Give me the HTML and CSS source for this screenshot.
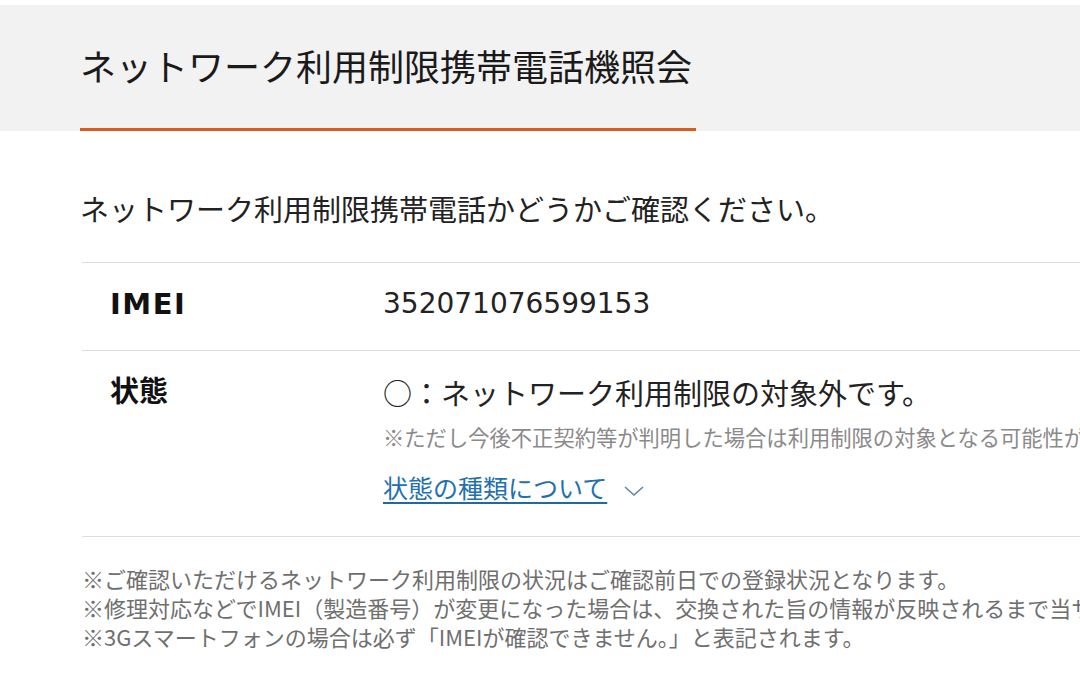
FILE: index.html
```html
<!DOCTYPE html>
<html lang="ja">
<head>
<meta charset="utf-8">
<title>ネットワーク利用制限携帯電話機照会</title>
<link rel="stylesheet" href="styles.css">
</head>
<body>
<div class="page">
  <header class="head">
    <h1 class="title">ネットワーク利用制限携帯電話機照会</h1>
  </header>
  <p class="intro">ネットワーク利用制限携帯電話かどうかご確認ください。</p>
  <div class="table">
    <div class="row row-imei">
      <div class="label label-latin">IMEI</div>
      <div class="value num">352071076599153</div>
    </div>
    <div class="row row-state">
      <div class="label">状態</div>
      <div class="value">
        <div class="status">○：ネットワーク利用制限の対象外です。</div>
        <div class="note">※ただし今後不正契約等が判明した場合は利用制限の対象となる可能性があります。</div>
        <div class="more">
          <a class="link" href="#">状態の種類について</a>
          <svg class="chev" width="22" height="12" viewBox="0 0 22 12"><polyline points="2,2 11,10 20,2" fill="none" stroke="#5f86a6" stroke-width="1.6"/></svg>
        </div>
      </div>
    </div>
  </div>
  <div class="notes">
    <p class="fn">※ご確認いただけるネットワーク利用制限の状況はご確認前日での登録状況となります。</p>
    <p class="fn">※修理対応などでIMEI（製造番号）が変更になった場合は、交換された旨の情報が反映されるまで当サイトでの確認結果は変更前の状態となります。</p>
    <p class="fn">※3Gスマートフォンの場合は必ず「IMEIが確認できません。」と表記されます。</p>
  </div>
</div>
</body>
</html>
```
FILE: styles.css
```css
html, body {
  margin: 0;
  padding: 0;
  background: #ffffff;
  overflow: hidden;
}
body {
  font-family: "DejaVu Sans", "Noto Sans CJK JP", sans-serif;
  color: #222222;
}
.page {
  width: 1400px;
  padding-top: 5px;
}
.head {
  background: #f2f2f2;
  padding: 0 0 0 80px;
}
.title {
  display: inline-block;
  margin: 0;
  padding: 33px 4px 36px 0;
  font-family: "Noto Sans CJK JP", sans-serif;
  font-weight: 400;
  font-size: 36px;
  line-height: 54px;
  color: #1a1a1a;
  border-bottom: 3px solid #e0591c;
  white-space: nowrap;
}
.intro {
  margin: 56px 0 33px 80px;
  font-family: "Noto Sans CJK JP", sans-serif;
  font-size: 29px;
  line-height: 42px;
  color: #222222;
  white-space: nowrap;
}
.table {
  margin-left: 82px;
  border-top: 1px solid #dedede;
}
.row {
  display: grid;
  grid-template-columns: 273px 1fr;
  border-bottom: 1px solid #dedede;
  padding-left: 28px;
}
.row-imei {
  padding-top: 20px;
  padding-bottom: 25px;
}
.row-state {
  padding-top: 20px;
  padding-bottom: 31px;
}
.label {
  font-family: "DejaVu Sans", "Noto Sans CJK JP", sans-serif;
  font-weight: 700;
  font-size: 29px;
  line-height: 42px;
  color: #111111;
}
.label-latin {
  letter-spacing: 1.5px;
}
.value {
  font-size: 29px;
  line-height: 42px;
  white-space: nowrap;
}
.num {
  font-family: "DejaVu Sans", sans-serif;
  font-size: 28px;
  color: #222222;
}
.status {
  font-family: "Noto Sans CJK JP", sans-serif;
  color: #222222;
}
.note {
  margin-top: 8px;
  font-family: "Noto Sans CJK JP", sans-serif;
  font-size: 21.3px;
  line-height: 32px;
  color: #8a8a8a;
}
.more {
  margin-top: 16px;
  display: flex;
  align-items: center;
  gap: 16px;
  height: 36px;
}
.link {
  font-family: "Noto Sans CJK JP", sans-serif;
  font-size: 25px;
  line-height: 36px;
  color: #2370ae;
  text-decoration: underline;
  text-decoration-thickness: 2px;
  text-underline-offset: 4px;
  text-decoration-color: #1f6aa5;
}
.chev {
  display: block;
  margin-top: 8px;
}
.notes {
  margin: 27px 0 0 82px;
}
.fn {
  margin: 0;
  font-family: "Noto Sans CJK JP", sans-serif;
  font-size: 22px;
  line-height: 29px;
  color: #6f6f6f;
  white-space: nowrap;
}
```
